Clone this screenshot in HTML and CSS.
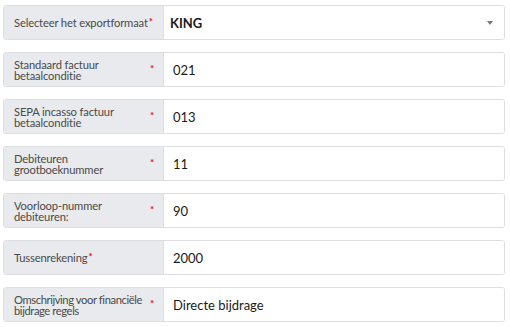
FILE: index.html
```html
<!DOCTYPE html>
<html lang="nl">
<head>
  <meta charset="UTF-8" />
  <title>Exportinstellingen</title>
  <link rel="stylesheet" href="styles.css">
</head>
<body>
  <form class="settings">
    <div class="row">
      <label class="label"><span class="text">Selecteer het exportformaat</span><span class="req">*</span></label>
      <div class="field select">
        <span class="value">KING</span>
        <span class="caret"></span>
      </div>
    </div>

    <div class="row">
      <label class="label"><span class="text">Standaard factuur betaalconditie</span><span class="req">*</span></label>
      <div class="field"><span class="value">021</span></div>
    </div>

    <div class="row">
      <label class="label"><span class="text">SEPA incasso factuur betaalconditie</span><span class="req">*</span></label>
      <div class="field"><span class="value">013</span></div>
    </div>

    <div class="row">
      <label class="label"><span class="text">Debiteuren grootboeknummer</span><span class="req">*</span></label>
      <div class="field"><span class="value">11</span></div>
    </div>

    <div class="row">
      <label class="label"><span class="text">Voorloop-nummer debiteuren:</span><span class="req">*</span></label>
      <div class="field"><span class="value">90</span></div>
    </div>

    <div class="row">
      <label class="label"><span class="text">Tussenrekening</span><span class="req">*</span></label>
      <div class="field"><span class="value">2000</span></div>
    </div>

    <div class="row">
      <label class="label"><span class="text tight">Omschrijving voor financiële bijdrage regels</span><span class="req">*</span></label>
      <div class="field"><span class="value">Directe bijdrage</span></div>
    </div>
  </form>
</body>
</html>
```

FILE: styles.css
```css
* {
  box-sizing: border-box;
}
body {
  margin: 0;
  padding: 5px 5px 0 3px;
  background-color: #fff;
  font-family: Lato, "Open Sans", Arial, sans-serif;
}
.settings {
  display: flex;
  flex-direction: column;
  gap: 12px;
}
.row {
  display: flex;
  height: 35px;
  border: 1px solid #dcdee2;
  border-radius: 3px;
  overflow: hidden;
}
.label {
  display: flex;
  align-items: center;
  width: 160px;
  padding: 0 6px 0 10px;
  background-color: #e8eaee;
  border-right: 1px solid #dcdee2;
  color: #4a4a4a;
  font-size: 11.2px;
  line-height: 11px;
  letter-spacing: -0.15px;
}
.tight {
  letter-spacing: -0.4px;
  margin-right: -3px;
}
.req {
  color: #e8101a;
  font-size: 10px;
  font-weight: bold;
  padding: 0 3px 0 1px;
  position: relative;
  top: -1px;
}
.field {
  flex: 1;
  display: flex;
  align-items: center;
  padding: 0 9px;
  background-color: #fff;
  color: #1a1a1a;
  font-size: 13px;
}
.select {
  justify-content: space-between;
  padding-left: 6px;
  font-weight: bold;
}
.caret {
  width: 0;
  height: 0;
  margin-right: 2px;
  border-left: 3px solid transparent;
  border-right: 3px solid transparent;
  border-top: 4px solid #777;
}
```
